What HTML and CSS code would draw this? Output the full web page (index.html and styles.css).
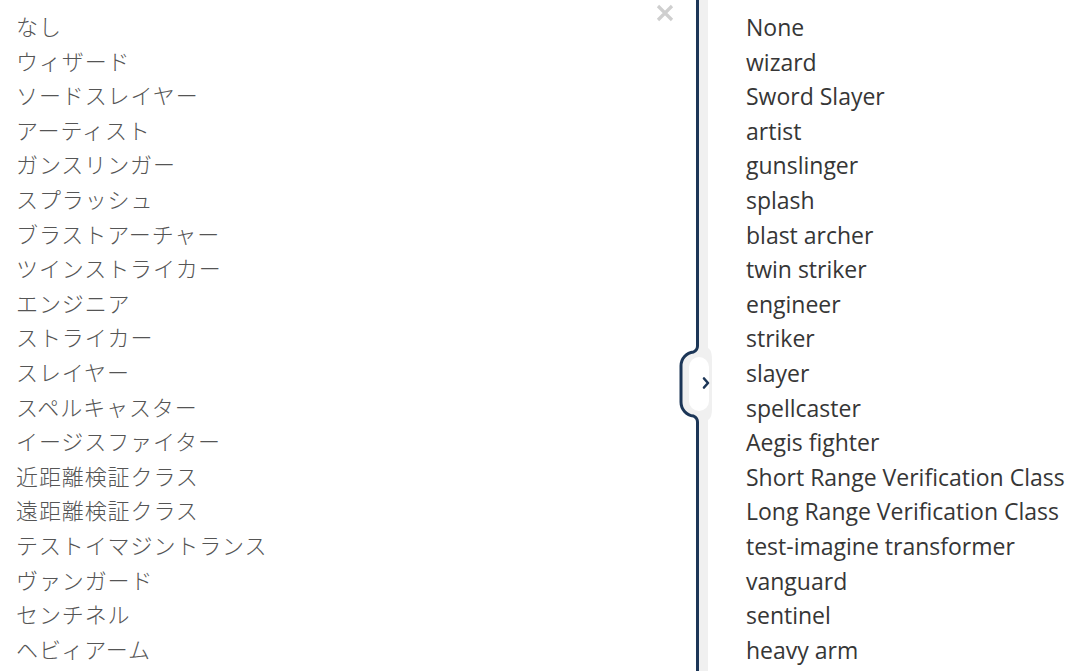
FILE: index.html
```html
<!DOCTYPE html>
<html lang="ja">
<head>
<meta charset="utf-8">
<link rel="stylesheet" href="styles.css">
</head>
<body>
<div class="page">
  <div class="pane left">
    <ul class="list ja">
      <li>なし</li>
      <li>ウィザード</li>
      <li>ソードスレイヤー</li>
      <li>アーティスト</li>
      <li>ガンスリンガー</li>
      <li>スプラッシュ</li>
      <li>ブラストアーチャー</li>
      <li>ツインストライカー</li>
      <li>エンジニア</li>
      <li>ストライカー</li>
      <li>スレイヤー</li>
      <li>スペルキャスター</li>
      <li>イージスファイター</li>
      <li>近距離検証クラス</li>
      <li>遠距離検証クラス</li>
      <li>テストイマジントランス</li>
      <li>ヴァンガード</li>
      <li>センチネル</li>
      <li>ヘビィアーム</li>
    </ul>
    <button class="close" aria-label="close">
      <svg width="18" height="18" viewBox="0 0 18 18"><path d="M2 2 L16 16 M16 2 L2 16" stroke="#cfcfcf" stroke-width="3.2" stroke-linecap="butt"/></svg>
    </button>
  </div>
  <div class="divider">
    <svg class="handle" width="48" height="96" viewBox="0 0 48 96">
      <path d="M26.5 0 V10 C26.5 14 24.5 15 22.5 16 A14 14 0 0 0 10 30 V66 A14 14 0 0 0 22.5 80 C24.5 81 26.5 82 26.5 86 V96 L37 96 V84 C40 82 41 79 41 72 V24 C41 17 40 14 37 12 V0 Z" fill="#f0f0f0"/>
      <path d="M26.5 0 V10 C26.5 14 24.5 15 22.5 16 A14 14 0 0 0 10 30 V66 A14 14 0 0 0 22.5 80 C24.5 81 26.5 82 26.5 86 V96" fill="none" stroke="#1c3657" stroke-width="3"/>
      <rect x="18" y="21" width="20" height="54" rx="10" fill="#fff"/>
      <path d="M33 42.5 L37 47 L33 51.5" fill="none" stroke="#1c3657" stroke-width="2.6" stroke-linecap="round" stroke-linejoin="round"/>
    </svg>
  </div>
  <div class="pane right">
    <ul class="list en">
      <li>None</li>
      <li>wizard</li>
      <li>Sword Slayer</li>
      <li>artist</li>
      <li>gunslinger</li>
      <li>splash</li>
      <li>blast archer</li>
      <li>twin striker</li>
      <li>engineer</li>
      <li>striker</li>
      <li>slayer</li>
      <li>spellcaster</li>
      <li>Aegis fighter</li>
      <li>Short Range Verification Class</li>
      <li>Long Range Verification Class</li>
      <li>test-imagine transformer</li>
      <li>vanguard</li>
      <li>sentinel</li>
      <li>heavy arm</li>
    </ul>
  </div>
</div>
</body>
</html>
```

FILE: styles.css
```css
html, body {
  margin: 0;
  padding: 0;
  background: #fff;
  height: 100%;
  overflow: hidden;
}

.page {
  display: flex;
  height: 100vh;
}

.pane {
  position: relative;
}

.left {
  width: 696px;
  box-sizing: border-box;
  padding: 8px 0 0 16px;
}

.right {
  flex: 1;
  padding: 10px 0 0 38px;
}

.list {
  list-style: none;
  margin: 0;
  padding: 0;
}

.list li {
  height: 34.6px;
  line-height: 34.6px;
  white-space: nowrap;
}

.ja {
  font-family: "Noto Sans CJK JP", sans-serif;
  font-weight: 300;
  font-size: 22px;
  letter-spacing: 0.9px;
  color: #555;
}

.en {
  font-family: "Open Sans", sans-serif;
  font-size: 23px;
  color: #363636;
}

.close {
  position: absolute;
  top: 4px;
  left: 656px;
  background: none;
  border: 0;
  padding: 0;
  width: 18px;
  height: 18px;
}

.divider {
  position: relative;
  width: 9px;
  border-left: 3px solid #1c3657;
  background: #f0f0f0;
}

.handle {
  position: absolute;
  left: -28px;
  top: 336px;
}
```
